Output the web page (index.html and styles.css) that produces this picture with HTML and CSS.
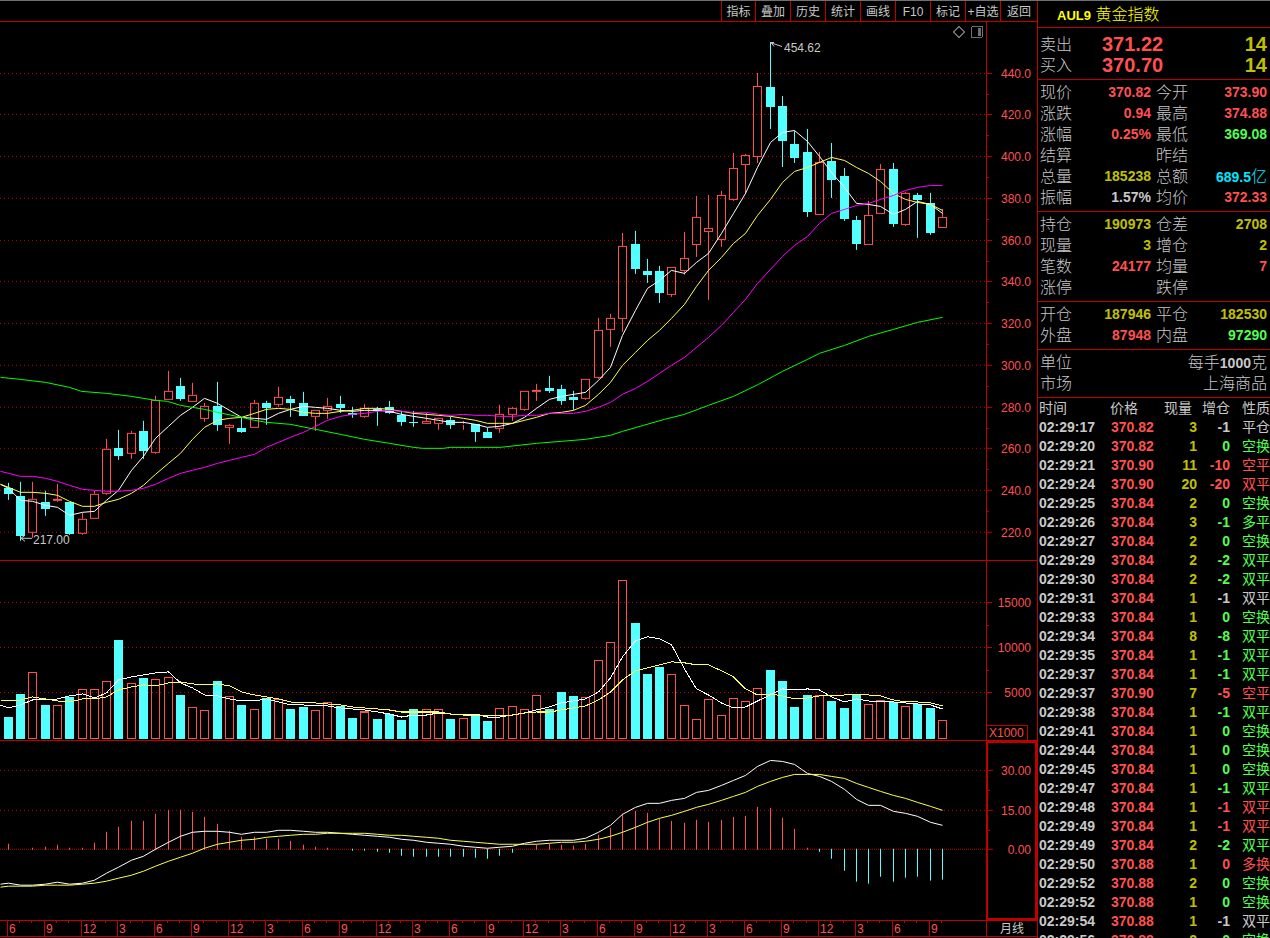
FILE: index.html
```html
<!DOCTYPE html>
<html lang="zh-CN">
<head>
<meta charset="utf-8">
<title>AUL9 黄金指数</title>
<link rel="stylesheet" href="styles.css">
</head>
<body>
<main class="chart">
  <nav class="toolbar">
    <button type="button">指标</button>
    <button type="button">叠加</button>
    <button type="button">历史</button>
    <button type="button">统计</button>
    <button type="button">画线</button>
    <button type="button">F10</button>
    <button type="button">标记</button>
    <button type="button">+自选</button>
    <button type="button">返回</button>
  </nav>

  <section class="panel panel-price">
    <div class="plot">
      <svg id="price" viewBox="0 22 986 538" preserveAspectRatio="none"></svg>
      <div class="notes" id="notes"></div>
      <div class="plot-tools">
        <button type="button" aria-label="菱形标记">
          <svg width="12" height="12" viewBox="0 0 12 12"><path d="M6 .5 11.500 6 6 11.500.5 6Z" fill="none" stroke="#707070"/></svg>
        </button>
        <button type="button" aria-label="侧栏">
          <svg width="12" height="12" viewBox="0 0 12 12"><rect x=".5" y=".5" width="11" height="11" rx="1.500" fill="none" stroke="#707070"/><rect x="7" y="2" width="3" height="8" fill="#707070"/></svg>
        </button>
      </div>
    </div>
    <div class="axis"><svg id="price-ticks" viewBox="0 22 8 538" preserveAspectRatio="none"></svg><div class="labels" id="price-labels"></div></div>
  </section>

  <section class="panel panel-volume">
    <div class="plot"><svg id="volume" viewBox="0 561 986 179" preserveAspectRatio="none"></svg></div>
    <div class="axis"><svg id="volume-ticks" viewBox="0 561 8 179" preserveAspectRatio="none"></svg><div class="labels" id="volume-labels"></div><span class="unit">X1000</span></div>
  </section>

  <section class="panel panel-macd">
    <div class="plot"><svg id="macd" viewBox="0 741 986 179" preserveAspectRatio="none"></svg></div>
    <div class="axis axis-active"><svg id="macd-ticks" viewBox="0 743 8 175" preserveAspectRatio="none"></svg><div class="labels" id="macd-labels"></div></div>
  </section>

  <footer class="timeline">
    <div class="months" id="months"></div>
    <button type="button" class="period">月线</button>
  </footer>
</main>

<aside class="quote">
  <h1><b>AUL9</b> 黄金指数</h1>
  <dl class="book">
    <div><dt>卖出</dt><dd class="up">371.22</dd><dd class="vol">14</dd></div>
    <div><dt>买入</dt><dd class="up">370.70</dd><dd class="vol">14</dd></div>
  </dl>
  <dl class="pairs">
    <div><dt>现价</dt><dd class="up">370.82</dd></div><div><dt>今开</dt><dd class="up">373.90</dd></div>
    <div><dt>涨跌</dt><dd class="up">0.94</dd></div><div><dt>最高</dt><dd class="up">374.88</dd></div>
    <div><dt>涨幅</dt><dd class="up">0.25%</dd></div><div><dt>最低</dt><dd class="down">369.08</dd></div>
    <div><dt>结算</dt><dd></dd></div><div><dt>昨结</dt><dd></dd></div>
    <div><dt>总量</dt><dd class="vol">185238</dd></div><div><dt>总额</dt><dd class="money">689.5<span class="han">亿</span></dd></div>
    <div><dt>振幅</dt><dd>1.57%</dd></div><div><dt>均价</dt><dd class="up">372.33</dd></div>
  </dl>
  <dl class="pairs">
    <div><dt>持仓</dt><dd class="vol">190973</dd></div><div><dt>仓差</dt><dd class="vol">2708</dd></div>
    <div><dt>现量</dt><dd class="vol">3</dd></div><div><dt>增仓</dt><dd class="vol">2</dd></div>
    <div><dt>笔数</dt><dd class="up">24177</dd></div><div><dt>均量</dt><dd class="up">7</dd></div>
    <div><dt>涨停</dt><dd></dd></div><div><dt>跌停</dt><dd></dd></div>
  </dl>
  <dl class="pairs">
    <div><dt>开仓</dt><dd class="vol">187946</dd></div><div><dt>平仓</dt><dd class="vol">182530</dd></div>
    <div><dt>外盘</dt><dd class="up">87948</dd></div><div><dt>内盘</dt><dd class="down">97290</dd></div>
  </dl>
  <dl class="pairs single">
    <div><dt>单位</dt><dd><span class="han">每手</span>1000<span class="han">克</span></dd></div>
    <div><dt>市场</dt><dd><span class="han">上海商品</span></dd></div>
  </dl>
  <table class="trades">
    <thead><tr><th>时间</th><th>价格</th><th>现量</th><th>增仓</th><th>性质</th></tr></thead>
    <tbody id="trades"></tbody>
  </table>
</aside>
<script src="chart.js"></script>
</body>
</html>
```

FILE: styles.css
```css
* { box-sizing: border-box; }

:root {
  --line: #c00000;
  --red: #ff5050;
  --green: #50ff50;
  --cyan: #54ffff;
  --olive: #c0c000;
  --gray: #c8c8c8;
}

body {
  margin: 0;
  height: 100vh;
  display: flex;
  overflow: hidden;
  border-top: 1px solid #707070;
  background: #000;
  color: var(--gray);
  font: 12px/16px "Liberation Sans", "Noto Sans CJK SC", sans-serif;
}

button {
  margin: 0;
  padding: 0;
  border: 0;
  background: none;
  color: inherit;
  font: inherit;
  white-space: nowrap;
}

.chart { flex: 1; min-width: 0; display: flex; flex-direction: column; }

.toolbar {
  flex: none;
  height: 21px;
  display: flex;
  justify-content: flex-end;
  border-bottom: 1px solid var(--line);
}
.toolbar button { width: 35px; padding-top: 1px; border-left: 1px solid var(--line); }
.toolbar button:first-child { width: 34px; }
.toolbar button:last-child { width: 37px; }

.panel { min-height: 0; display: flex; }
.panel-price { flex: 539 1 0; border-bottom: 1px solid var(--line); }
.panel-volume { flex: 180 1 0; border-bottom: 1px solid var(--line); }
.panel-macd { flex: 179 1 0; }

.plot { flex: 1; min-width: 0; position: relative; overflow: hidden; }
.plot > svg { display: block; width: 100%; height: 100%; }

.notes, .labels { position: absolute; inset: 0; }
.notes span { position: absolute; line-height: 14px; margin-top: -7px; }

.plot-tools { position: absolute; top: 4px; right: 3px; display: flex; gap: 6px; }
.plot-tools button { width: 12px; height: 12px; }
.plot-tools svg { display: block; }

.axis {
  flex: none;
  width: 51px;
  position: relative;
  border-left: 1px solid var(--line);
  color: var(--red);
}
.axis > svg { display: block; width: 8px; height: 100%; }
.axis-active { border: 2px solid var(--line); }
.labels span { position: absolute; right: 6px; line-height: 14px; margin-top: -6px; }
.axis-active .labels span { right: 4px; }
.unit {
  position: absolute;
  left: 0;
  bottom: 0;
  width: 41px;
  padding-left: 2px;
  line-height: 14px;
  border: solid var(--line);
  border-width: 1px 1px 0 0;
}

.timeline {
  flex: none;
  height: 18px;
  display: flex;
  border-top: 1px solid var(--line);
  color: var(--red);
}
.months { flex: 1; position: relative; border-bottom: 1px solid var(--line); height: 16px; }
.months span { position: absolute; top: 0; height: 15px; padding-left: 1px; border-left: 1px solid var(--line); }
.months i { position: absolute; top: 0; width: 1px; height: 2px; background: var(--line); }
.period { width: 51px; height: 16px; border: solid var(--line); border-width: 0 0 1px 1px; color: var(--gray); }

.up { color: var(--red); }
.down { color: var(--green); }
.vol { color: var(--olive); }
.money { color: #00e8ff; }
.han { font-weight: 300; font-size: 16px; }

.quote { flex: none; width: 233px; border-left: 1px solid var(--line); overflow: hidden; }
.quote h1 {
  margin: 0;
  height: 27px;
  padding-left: 19px;
  border-bottom: 1px solid var(--line);
  color: #ffff00;
  font-size: 16px;
  font-weight: 300;
  line-height: 27px;
}
.quote h1 b { font-size: 13px; font-weight: 700; }
.quote dl { margin: 0; padding: 2px 3px 3px 2px; border-bottom: 1px solid var(--line); }
.quote dl.book { padding-top: 6px; }
.quote dt, .quote dd { margin: 0; height: 21px; line-height: 21px; }
.quote dt { font-size: 16px; font-weight: 300; }
.quote dd { font-size: 14px; font-weight: 700; }
.book div { display: grid; grid-template-columns: 62px 1fr auto; }
.quote .book dd { font-size: 20px; }
.pairs { display: grid; grid-template-columns: 1fr 1fr; column-gap: 5px; }
.pairs.single { grid-template-columns: 1fr; }
.pairs div { display: flex; justify-content: space-between; }

.trades { width: 100%; margin-top: 1px; table-layout: fixed; border-collapse: collapse; font-size: 14px; }
.trades th { height: 19px; padding: 0; font-weight: 400; line-height: 19px; text-align: right; }
.trades td { height: 19px; padding: 0; font-weight: 700; line-height: 19px; text-align: right; white-space: nowrap; }
.trades th:nth-child(1) { width: 72px; padding-left: 1px; text-align: left; }
.trades th:nth-child(2) { width: 45px; text-align: left; }
.trades th:nth-child(3) { width: 42px; padding-right: 5px; }
.trades th:nth-child(4) { width: 33px; }
.trades td:nth-child(1) { padding-left: 1px; text-align: left; }
.trades td:nth-child(2) { padding-left: 1px; text-align: left; }
.trades td:nth-child(5) { font-weight: 400; }

svg { shape-rendering: crispEdges; }
.grid { stroke: var(--line); stroke-dasharray: 1 3; }
.grid-zero { stroke: var(--line); stroke-dasharray: 1 1; }
.tick { stroke: var(--line); }
.rise { stroke: var(--red); fill: none; }
.fall { stroke: var(--cyan); fill: none; }
.fall-body { fill: var(--cyan); }
.ma { fill: none; }
.ma-white { stroke: #fff; }
.ma-yellow { stroke: #ffff50; }
.ma-magenta { stroke: #ff00ff; }
.ma-green { stroke: #00ff00; }
.arrow { stroke: var(--gray); fill: none; }
```

FILE: chart.js
```js
const el = id => document.getElementById(id);
const list = s => s.trim().split(/\s+/).map(Number);
const xAt = i => Math.floor(8.3 + 12.29 * i);

// kind, high, body top, body bottom, low
const candles = `c 483 488 493 499;c 482 496 535 540;r 482 499 532 537;c 491 502 508 515;r 484 499 500 501;c 502 502 533 534;r 513 519 533 534;r 491 494 518 518;r 439 449 493 494;c 430 448 455 459;r 431 433 453 458;c 421 431 450 458;r 396 400 452 453;r 371 391 399 399;c 378 386 398 400;r 383 395 401 401;r 403 406 418 421;c 382 406 424 430;r 424 425 427 443;c 418 428 431 432;r 400 403 427 427;c 401 403 407 424;r 387 397 404 406;c 396 399 402 416;c 392 403 415 415;r 410 410 416 430;r 398 406 410 418;c 396 404 407 412;c 407 413 414 417;r 404 408 416 417;c 407 409 410 425;c 401 407 412 413;c 411 415 421 425;c 411 422 422 426;r 413 421 423 423;r 418 418 423 429;c 417 420 424 428;r 421 424 424 429;c 424 424 431 441;c 428 432 437 437;r 405 414 428 432;r 407 408 414 420;r 391 391 409 410;r 384 390 391 400;c 376 388 390 392;c 385 389 400 404;c 391 397 399 409;r 379 379 398 399;r 318 330 377 378;r 314 318 329 346;r 233 246 318 331;c 231 244 268 273;c 259 271 274 282;c 266 271 292 302;r 267 267 294 296;r 232 258 270 274;r 196 217 244 256;r 195 228 231 299;r 191 195 239 246;r 153 168 199 200;r 154 155 164 193;r 73 86 156 162;c 42 87 106 128;c 96 106 140 166;c 131 144 157 162;c 129 152 211 216;r 152 162 214 214;c 143 161 179 197;c 168 176 218 220;c 216 220 243 249;r 201 215 244 244;r 164 169 213 213;c 163 169 223 226;r 192 193 224 225;c 193 195 199 237;c 193 203 232 234;r 209 217 227 227`
  .split(';').map(s => { const [k, ...v] = s.split(' '); return [k, ...v.map(Number)]; });

const ma5 = list(`488 500 501 505 507 515 512 511 500 490 470 456 438 426 415 407 398 403 410 417 418 419 413 409 406 407 408 410 411 410 410 411 414 416 418 420 422 422 424 427 426 423 417 408 399 396 394 392 380 367 335 310 288 280 270 273 262 253 233 213 193 167 142 132 130 141 156 172 187 203 204 206 214 209 201 204 213`);
const ma10 = list(`487 492 492 493 495 501 506 506 502 499 493 485 474 463 453 439 427 420 418 417 413 409 408 409 412 413 413 411 410 408 408 409 411 413 414 415 416 418 420 423 423 423 420 417 413 412 410 405 394 382 365 352 340 330 318 304 286 270 257 243 233 215 199 182 171 167 162 157 160 167 173 181 193 199 202 204 210`);
const ma20 = list(`473 476 476 478 481 485 489 490 491 491 490 488 484 478 473 470 467 463 460 457 454 447 442 437 432 426 420 416 414 413 411 410 411 412 412 414 415 414 415 415 416 416 415 415 413 413 413 411 407 402 394 388 381 373 365 357 347 337 325 312 299 283 269 256 245 236 223 213 209 205 203 199 195 190 187 185 185`);
const ma60 = [[0,377],[20,379],[45,382],[69,387],[81,391],[106,393],[131,396],[155,400],[167,401],[180,405],[204,409],[217,412],[241,417],[254,420],[266,422],[290,424],[315,429],[340,434],[364,439],[389,443],[413,447],[422,448],[443,448],[450,447],[500,447],[536,443],[561,441],[585,439],[610,435],[622,431],[664,419],[684,414],[708,405],[733,396],[758,384],[782,371],[807,359],[819,353],[844,345],[868,336],[893,329],[917,322],[942,317]];

const volumes = list(`716 694 672 705 705 697 689 689 681 640 683 678 679 677 695 707 710 681 696 705 709 698 699 709 707 710 702 706 717 711 718 713 719 709 709 709 718 717 714 720 708 706 709 695 709 692 696 697 660 642 580 623 674 667 674 705 718 699 714 698 701 688 670 681 707 695 695 701 708 695 704 700 702 706 704 708 719`);
const vma5 = list(`707 704 699 699 698 695 693 697 692 679 676 674 672 671 682 687 694 695 698 700 700 698 701 704 704 705 705 707 708 709 711 713 716 714 714 712 713 713 713 716 716 714 712 709 706 702 700 698 691 677 656 640 636 638 644 668 688 694 702 707 706 700 694 688 689 688 689 696 701 698 700 701 701 702 703 704 708`);
const vma10 = list(`700 699 696 698 700 701 698 698 696 689 686 684 685 682 681 683 684 683 685 691 694 696 698 701 702 702 703 704 706 707 708 709 711 711 711 711 713 714 714 715 714 714 712 711 711 709 707 705 699 691 679 670 667 664 661 662 664 664 670 676 688 694 693 695 698 697 695 695 694 694 694 695 699 701 701 702 705`);

const bars = list(`844 849 848 847 845 848 848 843 832 827 821 821 814 810 810 812 817 824 831 837 837 839 839 841 845 847 848 849 850 850 851 852 855 856 856 856 856 856 857 858 855 852 849 845 844 845 846 844 835 828 814 811 813 819 821 823 820 822 820 817 816 807 808 818 829 848 851 858 870 881 883 876 881 877 876 880 879`);
const dif = list(`883 885 885 884 882 884 883 880 873 867 860 856 849 842 836 832 831 831 832 834 832 832 830 830 831 832 832 833 834 835 836 837 839 840 842 843 844 846 847 848 847 846 843 841 840 840 840 838 832 825 814 807 803 803 800 798 792 790 785 780 775 766 760 761 764 773 776 781 789 799 805 805 811 813 816 822 825`);
const dea = list(`886 886 886 885 885 885 884 883 881 878 875 871 866 861 857 853 848 844 842 840 839 837 836 835 834 834 833 833 833 833 834 835 835 836 837 838 840 841 842 843 844 844 844 844 843 842 842 841 839 836 832 827 822 818 815 811 807 804 800 796 792 786 781 777 774 774 774 776 778 783 787 791 795 798 802 806 810`);

const seg = (cls, x1, y1, x2, y2) => `<path class="${cls}" d="M${x1} ${y1}L${x2} ${y2}"/>`;
const gridLine = (y, cls = 'grid') => seg(cls, 0, y + .5, 986, y + .5);
const poly = (cls, pts) => `<polyline class="ma ${cls}" points="${pts.map(p => (p[0] + .5) + ',' + (p[1] + .5)).join(' ')}"/>`;
const series = (cls, start, ys) => poly(cls, [[0, start], ...ys.map((y, i) => [xAt(i), y])]);

function body(kind, x, top, bottom) {
  return kind === 'c'
    ? `<rect class="fall-body" x="${x - 4}" y="${top}" width="9" height="${bottom - top + 1}"/>`
    : `<rect class="rise" x="${x - 3.5}" y="${top + .5}" width="8" height="${bottom - top}"/>`;
}

function drawAxis(name, top, height, majors, minors) {
  el(name + '-ticks').innerHTML =
    majors.map(m => seg('tick', 0, m[0] + .5, 5, m[0] + .5)).join('') +
    minors.map(y => seg('tick', 0, y + .5, 2, y + .5)).join('');
  el(name + '-labels').innerHTML = majors
    .map(([y, t]) => `<span style="top:${(y - top) / height * 100}%">${t}</span>`).join('');
}

// Price panel
const priceY = [73, 114, 156, 198, 240, 281, 323, 365, 407, 448, 490, 532];
el('price').innerHTML = priceY.map(y => gridLine(y)).join('') +
  candles.map(([k, h, t, b, l], i) => {
    const x = xAt(i), c = k === 'c' ? 'fall' : 'rise';
    return (h < t ? seg(c, x + .5, h, x + .5, t) : '') + (l > b ? seg(c, x + .5, b + 1, x + .5, l + 1) : '') + body(k, x, t, b);
  }).join('') +
  series('ma-white', 484, ma5) + series('ma-yellow', 484, ma10) + series('ma-magenta', 471, ma20) +
  poly('ma-green', ma60) +
  '<path class="arrow" d="M21 538.5H32M21 538.5l4 -3M21 538.5l4 3M770 42.500L782 46.500M770 42.500h4M771 42.500l3 4"/>';
drawAxis('price', 22, 538, priceY.map((y, n) => [y, (440 - n * 20).toFixed(1)]), priceY.slice(1).map((y, n) => Math.round((y + priceY[n]) / 2)));
el('notes').innerHTML = [[33, 540, '217.00'], [784, 48, '454.62']]
  .map(([x, y, t]) => `<span style="left:${x / 986 * 100}%;top:${(y - 22) / 538 * 100}%">${t}</span>`).join('');

// Volume panel
el('volume').innerHTML = [602, 647, 692].map(y => gridLine(y)).join('') +
  volumes.map((y, i) => body(candles[i][0], xAt(i), y, 737)).join('') +
  series('ma-white', 704, vma5) + series('ma-yellow', 700, vma10);
drawAxis('volume', 561, 179, [[602, '15000'], [647, '10000'], [692, '5000']], [625, 670]);

// MACD panel
el('macd').innerHTML = gridLine(770) + gridLine(810) + gridLine(849, 'grid-zero') +
  bars.map((y, i) => {
    const x = xAt(i) + .5;
    return y < 849 ? seg('rise', x, y, x, 850) : y > 849 ? seg('fall', x, 849, x, y + 1) : '';
  }).join('') +
  series('ma-white', 884, dif) + series('ma-yellow', 887, dea);
drawAxis('macd', 743, 175, [[770, '30.00'], [810, '15.00'], [849, '0.00']], [790, 830]);

// Month scale: a labelled divider every third month
let months = '';
for (let n = 0; n < 77; n++) {
  const left = Math.floor(7.3 + 12.29 * n) / 986 * 100;
  months += n % 3 ? `<i style="left:${left}%"></i>` : `<span style="left:${left}%">${[6, 9, 12, 3][n / 3 % 4]}</span>`;
}
el('months').innerHTML = months;

// Trades: seconds, price, volume, open interest change, nature, tone
const tones = { r: 'up', g: 'down', w: '' };
el('trades').innerHTML = `17 82 3 -1 平仓 w;20 82 1 0 空换 g;21 90 11 -10 空平 r;24 90 20 -20 双平 r;25 84 2 0 空换 g;26 84 3 -1 多平 g;27 84 2 0 空换 g;29 84 2 -2 双平 g;30 84 2 -2 双平 g;31 84 1 -1 双平 w;33 84 1 0 空换 g;34 84 8 -8 双平 g;35 84 1 -1 双平 g;37 84 1 -1 双平 g;37 90 7 -5 空平 r;38 84 1 -1 双平 g;41 84 1 0 空换 g;44 84 1 0 空换 g;45 84 1 0 空换 g;47 84 1 -1 双平 g;48 84 1 -1 双平 r;49 84 1 -1 双平 r;49 84 2 -2 双平 g;50 88 1 0 多换 r;52 88 2 0 空换 g;52 88 1 0 空换 g;54 88 1 -1 双平 w;56 88 2 0 空换 g`
  .split(';').map(row => {
    const [s, p, v, d, n, t] = row.split(' ');
    return `<tr><td>02:29:${s}</td><td class="up">370.${p}</td><td class="vol">${v}</td><td class="${tones[t]}">${d}</td><td class="${tones[t]}">${n}</td></tr>`;
  }).join('');
```
